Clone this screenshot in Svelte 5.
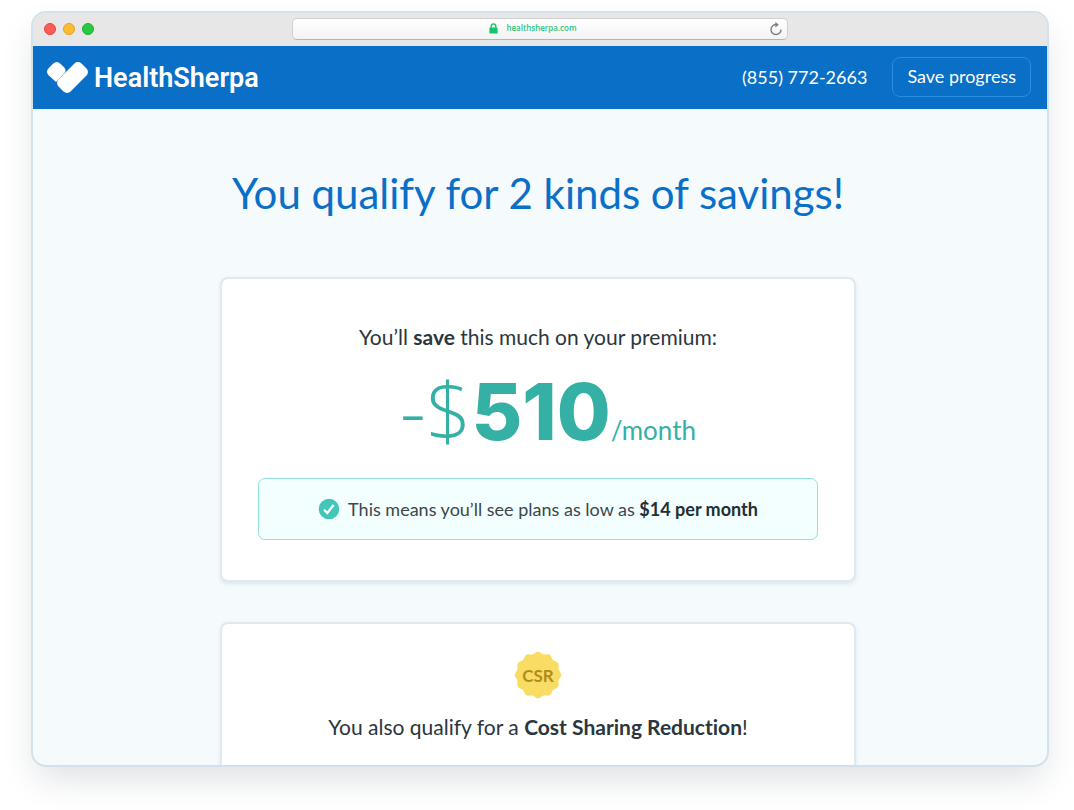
<script>
  const phone = '(855) 772-2663';
  const savings = { amount: 510, lowest: 14 };

  // Wavy edge of the badge: a circle whose radius rises and falls twelve times.
  const points = [];
  for (let i = 0; i < 180; i++) {
    const a = (i / 180) * Math.PI * 2;
    const r = 22.3 + Math.cos(12 * a);
    points.push(`${(24 + r * Math.sin(a)).toFixed(2)},${(24 - r * Math.cos(a)).toFixed(2)}`);
  }
  const badge = points.join(' ');
</script>

<div class="page">
  <div class="window">
    <div class="chrome">
      <div class="lights">
        <span class="light red"></span>
        <span class="light amber"></span>
        <span class="light green"></span>
      </div>
      <div class="address">
        <label class="site">
          <svg width="9" height="11" viewBox="0 0 9 11" aria-hidden="true">
            <path d="M2.2 5V3.2a2.3 2.3 0 0 1 4.6 0V5" fill="none" stroke="#15c46c" stroke-width="1.4" />
            <rect x="0.4" y="4.4" width="8.2" height="6.2" rx="0.6" fill="#15c46c" />
          </svg>
          <input type="text" value="healthsherpa.com" aria-label="Address" />
        </label>
        <button class="reload" aria-label="Reload">
          <svg width="14" height="14" viewBox="0 0 14 14" aria-hidden="true">
            <path d="M7.6 2.6A5 5 0 1 0 12 7.4" fill="none" stroke="#7b8084" stroke-width="1.4" />
            <path d="M6.4 0 9.8 2.8 6.4 5.6Z" fill="#7b8084" />
          </svg>
        </button>
      </div>
    </div>

    <header>
      <a class="brand" href="#home">
        <svg width="41" height="31" viewBox="0 0 41 31" aria-hidden="true">
          <path d="M9 20 1.6 13.2Q-1.6 9.8 1.6 6.2L6 1.7Q9.8-1.5 13.4 1.7L17 5.2Q19.8 8.2 17.6 11Z" fill="#fff" />
          <rect x="17" y="-0.75" width="17" height="32.5" rx="5" transform="rotate(45 25.5 15.5)" fill="#fff" />
        </svg>
        <span>HealthSherpa</span>
      </a>
      <div class="actions">
        <a class="phone" href="tel:8557722663">{phone}</a>
        <button class="save">Save progress</button>
      </div>
    </header>

    <main>
      <h1>You qualify for 2 kinds of savings!</h1>

      <section class="card">
        <p class="lead">You’ll <b>save</b> this much on your premium:</p>
        <p class="amount">
          <span class="sign">-$</span><strong>{savings.amount}</strong><span class="per">/month</span>
        </p>
        <p class="note">
          <svg width="22" height="22" viewBox="0 0 22 22" aria-hidden="true">
            <circle cx="11" cy="11" r="10.3" fill="#43c6b7" />
            <path d="M6 11.8 9.3 15 15.6 7" fill="none" stroke="#fff" stroke-width="2.2" />
          </svg>
          <span>This means you’ll see plans as low as <b>${savings.lowest} per month</b></span>
        </p>
      </section>

      <section class="card second">
        <div class="badge">
          <svg viewBox="0 0 48 48" aria-hidden="true"><polygon points={badge} fill="#f9dc63" /></svg>
          <span>CSR</span>
        </div>
        <p class="lead">You also qualify for a <b>Cost Sharing Reduction</b>!</p>
      </section>
    </main>
  </div>
</div>

<style>
  :global(body) {
    margin: 0;
    background: #fff;
  }
  .page {
    box-sizing: border-box;
    height: 100vh;
    padding: 11px 25px 43px 31px;
    font-family: Lato, 'Open Sans', sans-serif;
    font-variant-ligatures: none;
    color: #2b363e;
    overflow: hidden;
  }
  .window {
    box-sizing: border-box;
    height: 100%;
    border: 2px solid #d3e1ea;
    border-radius: 15px;
    overflow: hidden;
    background: #f5fafd;
    box-shadow: 0 16px 34px -6px rgba(40, 60, 75, 0.17);
    display: flex;
    flex-direction: column;
  }
  .chrome {
    box-sizing: border-box;
    flex: none;
    height: 33px;
    padding-bottom: 2px;
    background: #e7e7e7;
    display: grid;
    grid-template-columns: 1fr minmax(0, 496px) 1fr;
    align-items: center;
  }
  .lights {
    display: flex;
    gap: 7px;
    padding-left: 11px;
  }
  .light {
    box-sizing: border-box;
    width: 12px;
    height: 12px;
    border-radius: 50%;
    border: 1px solid;
  }
  .red { background: #fc5b57; border-color: #e2453f; }
  .amber { background: #fdbc2e; border-color: #e0a02a; }
  .green { background: #28c840; border-color: #1eae34; }
  .address {
    box-sizing: border-box;
    height: 22px;
    display: grid;
    grid-template-columns: 1fr 18px;
    align-items: center;
    border: 1px solid #d0d0d0;
    border-bottom-color: #b5b5b5;
    border-radius: 5px;
    background: linear-gradient(#fff, #f3f3f3);
  }
  .site {
    padding-left: 4px;
    display: flex;
    justify-content: center;
    align-items: center;
    gap: 8px;
  }
  .site input {
    field-sizing: content;
    border: 0;
    padding: 0 0 2px;
    background: none;
    outline: none;
    font: 600 8px 'Open Sans', sans-serif;
    line-height: 12px;
    color: #2fc481;
  }
  button {
    font-family: inherit;
    cursor: pointer;
  }
  .reload {
    border: 0;
    padding: 0;
    background: none;
    display: flex;
  }
  header {
    flex: none;
    box-sizing: border-box;
    height: 63px;
    padding: 0 16px 0 14px;
    background: #0a6fc7;
    display: flex;
    align-items: center;
    justify-content: space-between;
  }
  a {
    color: #fff;
    text-decoration: none;
  }
  .brand {
    display: flex;
    align-items: center;
    gap: 6px;
    font: 600 27px Roboto, sans-serif;
  }
  .actions {
    padding-bottom: 2px;
    display: flex;
    align-items: center;
    gap: 25px;
  }
  .phone {
    font-size: 18px;
  }
  .save {
    box-sizing: border-box;
    height: 40px;
    padding: 0 14px 2px;
    border: 1px solid #2b8ce0;
    border-radius: 8px;
    background: none;
    color: #fff;
    font-size: 18px;
  }
  main {
    padding: 0 24px 40px 20px;
    display: flex;
    flex-direction: column;
    align-items: center;
  }
  h1 {
    margin: 56px 0 56px;
    font-size: 42px;
    line-height: 56px;
    font-weight: 400;
    color: #0a6fc7;
    text-align: center;
  }
  p {
    margin: 0;
  }
  .card {
    box-sizing: border-box;
    width: 100%;
    max-width: 636px;
    padding: 42px 36px 40px;
    border: 2px solid #dfe9f0;
    border-radius: 8px;
    background: #fff;
    box-shadow: 0 2px 4px rgba(60, 90, 110, 0.12);
    text-align: center;
  }
  .lead {
    font-size: 21px;
    line-height: 32px;
  }
  .amount {
    display: flex;
    justify-content: center;
    align-items: baseline;
    margin: 14px 0 24px;
    padding-left: 20px;
    line-height: 84px;
    font-size: 80px;
    font-family: 'Open Sans', sans-serif;
    color: #35b0a5;
  }
  .sign {
    font-weight: 300;
  }
  .amount strong {
    font-family: Inter, sans-serif;
    font-size: 78px;
    font-weight: 800;
  }
  .per {
    font-family: Lato, sans-serif;
    font-size: 26px;
    line-height: 32px;
  }
  .note {
    box-sizing: border-box;
    min-height: 62px;
    padding: 8px;
    display: flex;
    justify-content: center;
    align-items: center;
    gap: 8px;
    border: 1px solid #90e2d9;
    border-radius: 7px;
    background: #f3fefe;
    font-size: 18px;
    line-height: 24px;
    color: #3c464d;
  }
  .note b {
    color: #222d35;
  }
  .second {
    margin-top: 40px;
    padding-top: 27px;
  }
  .badge {
    position: relative;
    width: 48px;
    height: 48px;
    margin: 0 auto 12px;
    display: grid;
    place-items: center;
  }
  .badge svg {
    position: absolute;
    inset: 0;
  }
  .badge span {
    position: relative;
    font-size: 17px;
    font-weight: 700;
    color: #b08d1b;
  }
</style>
